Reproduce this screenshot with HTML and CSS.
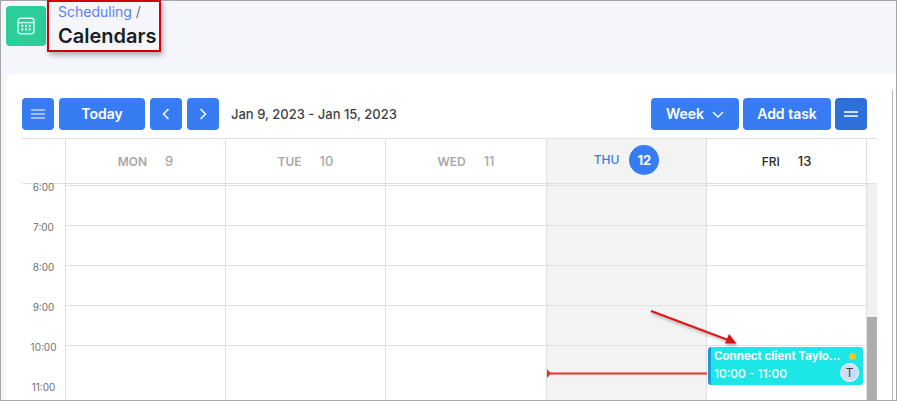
FILE: index.html
```html
<!DOCTYPE html>
<html lang="en">
<head>
<meta charset="utf-8">
<title>Calendars</title>
<link rel="stylesheet" href="styles.css">
</head>
<body>
<div class="frame">
  <header class="page-head">
    <div class="app-icon">
      <svg width="18" height="18" viewBox="0 0 18 18" fill="none" stroke="#d8fff2" stroke-width="1.4">
        <rect x="1" y="1.2" width="16" height="15.6" rx="2.5"/>
        <path d="M1 5.6h16"/>
        <g fill="#fff" stroke="none">
          <rect x="4.3" y="7.8" width="2" height="2"/><rect x="8" y="7.8" width="2" height="2"/><rect x="11.7" y="7.8" width="2" height="2"/>
          <rect x="4.3" y="11.4" width="2" height="2"/><rect x="8" y="11.4" width="2" height="2"/><rect x="11.7" y="11.4" width="2" height="2"/>
        </g>
      </svg>
    </div>
    <div class="crumbs">
      <div class="crumb-line"><a class="crumb-link">Scheduling</a> <span class="crumb-sep">/</span></div>
      <h1 class="page-title">Calendars</h1>
    </div>
  </header>
  <main class="card">
    <div class="toolbar">
      <button class="btn btn-square">
        <svg width="14" height="12" viewBox="0 0 14 12" stroke="#fff" stroke-width="1.2"><path d="M0 2h14M0 6h14M0 10h14"/></svg>
      </button>
      <button class="btn btn-today">Today</button>
      <button class="btn btn-square">
        <svg width="8" height="12" viewBox="0 0 8 12" fill="none" stroke="#fff" stroke-width="1.5"><path d="M6.500 1 1.500 6l5 5"/></svg>
      </button>
      <button class="btn btn-square">
        <svg width="8" height="12" viewBox="0 0 8 12" fill="none" stroke="#fff" stroke-width="1.5"><path d="M1.500 1l5 5-5 5"/></svg>
      </button>
      <span class="range">Jan 9, 2023 - Jan 15, 2023</span>
      <span class="spacer"></span>
      <button class="btn btn-week">Week
        <svg width="12" height="7" viewBox="0 0 12 7" fill="none" stroke="#fff" stroke-width="1.4"><path d="M1 1l5 5 5-5"/></svg>
      </button>
      <button class="btn btn-add">Add task</button>
      <button class="btn btn-square btn-dark">
        <svg class="icon-up" width="14" height="6" viewBox="0 0 14 6" stroke="#fff" stroke-width="1.3"><path d="M0 1h14M0 5h14"/></svg>
      </button>
    </div>
    <div class="calendar">
      <div class="week-head">
        <div class="gutter-head"></div>
        <div class="day-head muted"><span>MON</span><span class="num">9</span></div>
        <div class="day-head muted"><span>TUE</span><span class="num">10</span></div>
        <div class="day-head muted"><span>WED</span><span class="num">11</span></div>
        <div class="day-head today"><span>THU</span><span class="today-num">12</span></div>
        <div class="day-head fri"><span>FRI</span><span class="num">13</span></div>
        <div class="head-end"></div>
      </div>
      <div class="week-body">
        <div class="times">
          <div class="time">6:00</div>
          <div class="time">7:00</div>
          <div class="time">8:00</div>
          <div class="time">9:00</div>
          <div class="time">10:00</div>
          <div class="time">11:00</div>
        </div>
        <div class="col"><div class="slot"></div><div class="slot"></div><div class="slot"></div><div class="slot"></div><div class="slot"></div></div>
        <div class="col"><div class="slot"></div><div class="slot"></div><div class="slot"></div><div class="slot"></div><div class="slot"></div></div>
        <div class="col"><div class="slot"></div><div class="slot"></div><div class="slot"></div><div class="slot"></div><div class="slot"></div></div>
        <div class="col col-today"><div class="slot"></div><div class="slot"></div><div class="slot"></div><div class="slot"></div><div class="slot"></div></div>
        <div class="col"><div class="slot"></div><div class="slot"></div><div class="slot"></div><div class="slot"></div><div class="slot"></div></div>
        <div class="scroll"><div class="thumb"></div></div>
      </div>
    </div>
  </main>
  <div class="event">
    <div class="event-row"><span class="event-title">Connect client Taylo...</span><span class="event-dot"></span></div>
    <div class="event-row"><span class="event-time">10:00 - 11:00</span><span class="avatar">T</span></div>
  </div>
  <div class="edge-line"></div>
  <svg class="annot" width="897" height="401" viewBox="0 0 897 401">
    <defs><filter id="s" x="-20%" y="-50%" width="140%" height="200%"><feDropShadow dx="1" dy="2" stdDeviation="1.500" flood-color="#000" flood-opacity=".3"/></filter></defs>
    <g filter="url(#s)">
      <path d="M651 311 728 340" stroke="#d81414" stroke-width="2" fill="none"/>
      <path d="M736.500 343.500 725 343.500 729 334z" fill="#d81414"/>
    </g>
    <path d="M707 373.500H549" stroke="#e5352c" stroke-width="2"/>
    <path d="M547 369 551 373.500 547 378z" fill="#e5352c"/>
  </svg>
</div>
</body>
</html>
```
FILE: styles.css
```css
* { box-sizing: border-box; }
html, body { margin: 0; padding: 0; }
body { font-family: Inter, "Liberation Sans", sans-serif; background: #fff; }
.frame {
  position: relative;
  width: 897px;
  height: 401px;
  box-shadow: inset 0 0 0 1px #a6a6a6;
  background: #f5f6fb;
  overflow: hidden;
}
.page-head { display: flex; height: 74px; padding: 6px 0 0 6px; align-items: flex-start; }
.app-icon {
  width: 40px; height: 40px; border-radius: 4px; background: #2bcd98;
  display: flex; align-items: center; justify-content: center;
}
.crumbs {
  margin: -6px 0 0 1px;
  width: 114px; height: 52px;
  border: 2px solid #d0000c;
  box-shadow: 2px 3px 5px rgba(0,0,0,.3);
  padding: 0 0 0 9px;
}
.crumb-line { font-size: 14px; line-height: 20px; color: #6b7280; }
.crumb-link { color: #5b80f0; }
.page-title { margin: 2px 0 0; font-size: 20px; line-height: 24px; font-weight: 600; color: #1a1d24; }
.card {
  margin: 0 1px 0 6px; height: 326px; overflow: hidden;
  background: #fff; border-radius: 8px 0 0 0;
  padding: 24px 0 0 16px;
}
.toolbar { display: flex; align-items: center; width: 845px; height: 32px; gap: 5px; }
.btn {
  height: 32px; border: 0; border-radius: 4px; background: #387cf4; color: #fff;
  font: 600 14px/20px Inter, "Liberation Sans", sans-serif;
  display: flex; align-items: center; justify-content: center; padding: 0;
}
.btn-square { width: 32px; }
.btn-today { width: 86px; }
.btn-week { width: 88px; gap: 8px; }
.btn-add { width: 88px; margin-left: -1px; }
.btn-dark { background: #2f6fd8; margin-left: -1px; padding-bottom: 1px; }
.range { margin-left: 7px; font-size: 13px; font-weight: 500; color: #3c3f46; }
.spacer { flex: 1; }
.calendar { margin-top: 8px; width: 855px; }
.week-head { display: flex; height: 46px; border-top: 1px solid #e0e0e0; border-bottom: 1px solid #e0e0e0; }
.gutter-head { width: 44px; border-right: 1px solid #e0e0e0; }
.day-head {
  width: 160px; border-right: 1px solid #e0e0e0;
  display: flex; align-items: center; justify-content: center; gap: 18px;
  font-size: 12px; font-weight: 600;
}
.day-head:nth-child(4) { width: 161px; }
.day-head .num { font-size: 13px; font-weight: 500; }
.muted { color: #a8a8a8; }
.today { background: #f3f3f3; color: #387cf4; gap: 10px; padding-bottom: 3px; font-weight: 500; }
.today-num {
  width: 30px; height: 30px; border-radius: 50%; background: #387cf4; color: #fff;
  display: flex; align-items: center; justify-content: center; font-size: 13px; font-weight: 700;
}
.fri { color: #2b2b2b; font-weight: 500; }
.head-end { width: 10px; }
.week-body { display: flex; height: 216px; }
.times { width: 44px; border-right: 1px solid #e0e0e0; font-size: 10px; color: #707070; }
.time { height: 40px; text-align: center; line-height: 14px; }
.time:first-child { margin-top: -4px; }
.col { width: 160px; border-right: 1px solid #e0e0e0; overflow: hidden; }
.col:nth-child(4) { width: 161px; }
.col-today { background: #f3f3f3; }
.slot { height: 40px; border-top: 1px solid #e0e0e0; }
.slot:first-child { margin-top: 1px; }
.scroll { width: 10px; background: #f1f1f1; position: relative; }
.thumb { position: absolute; left: 0; right: 0; top: 133px; height: 90px; background: #adadad; }
.event {
  position: absolute; left: 708px; top: 347px; width: 155px; height: 38px;
  background: #1de6e6; border-left: 3px solid #1a9ad6; border-radius: 3px;
  color: #fff; padding: 2px 4px 0 3px;
}
.event-row { display: flex; justify-content: space-between; align-items: center; }
.event-title { font-size: 11.500px; font-weight: 700; line-height: 14px; white-space: nowrap; }
.event-dot { flex: none; width: 7px; height: 7px; border-radius: 50%; background: #fcc419; margin-right: 3px; }
.event-time { font-size: 12px; font-weight: 500; line-height: 18px; margin-top: 2px; }
.avatar {
  flex: none; margin-top: -1px;
  width: 19px; height: 19px; border-radius: 50%; background: #cfdcf5; color: #444;
  border: 1px solid #fff; font-size: 12px; display: flex; align-items: center; justify-content: center;
}
.edge-line { position: absolute; left: 892px; top: 90px; bottom: 0; width: 1px; background: #b8b8b8; }
.annot { position: absolute; left: 0; top: 0; pointer-events: none; }
```
